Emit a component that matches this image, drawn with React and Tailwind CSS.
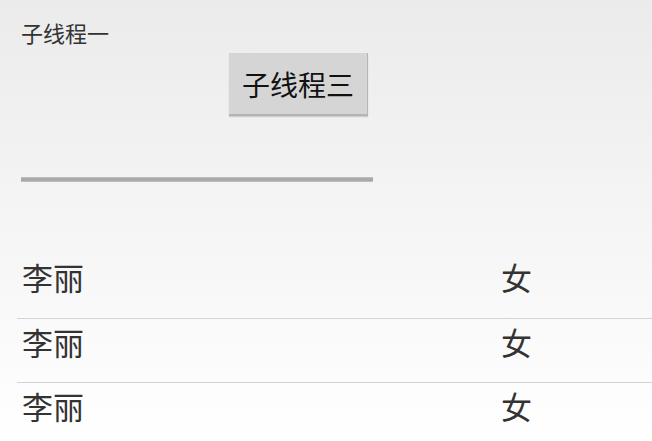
export default function App() {
  const rows = [0, 1, 2];
  const font = { fontFamily: '"Noto Sans CJK SC", "Noto Sans", sans-serif' };
  return (
    <div
      className="w-[652px] h-[441px] overflow-hidden bg-gradient-to-b from-[#ebebeb] to-[#ffffff]"
      style={font}
    >
      <div className="pl-[21px] pt-[21px]">
        <div className="text-[22px] leading-[22px] text-[#333333]">子线程一</div>
        <div className="mt-[10px] pl-[208px]">
          <div className="w-[139px] h-[63px] flex items-center justify-center bg-[#d5d5d5] border-b-2 border-r border-[#b5b5b5] shadow-[0_1px_1px_rgba(0,0,0,0.15)] text-[28px] leading-none text-[#111111]">
            子线程三
          </div>
        </div>
        <div className="mt-[61px] w-[352px] h-[5px] bg-[#a9a9a9] border-y border-[#bdbdbd]" />
      </div>
      <div className="mt-[72px]">
        {rows.map((i) => (
          <div
            key={i}
            className={`flex h-[64px] pt-[7px] ml-[17px] ${i > 0 ? "border-t border-[#d4d4d4]" : ""}`}
          >
            <div className="pl-[5px] w-[484px] text-[31px] leading-[31px] text-[#333333]">李丽</div>
            <div className="text-[31px] leading-[31px] text-[#333333]">女</div>
          </div>
        ))}
      </div>
    </div>
  );
}
